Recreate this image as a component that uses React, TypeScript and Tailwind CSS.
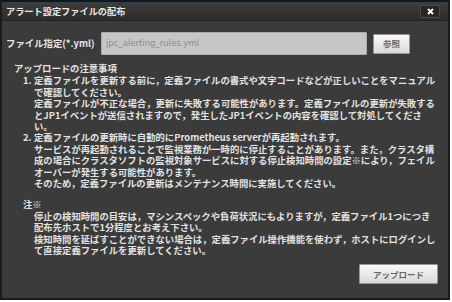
import React from 'react';

const font = { fontFamily: '"Noto Sans CJK JP", "Noto Sans", sans-serif' };

function Line({ children }: { children: React.ReactNode }) {
  return <div className="whitespace-nowrap">{children}</div>;
}

export default function App() {
  return (
    <div className="w-[452px] h-[302px] bg-white" style={font}>
      <div className="w-[450px] h-[300px] flex flex-col bg-[#3b3b3b] border-[2px] border-[#1c1c1c] border-t-[#0e1822]">
        {/* title bar */}
        <div className="h-[19px] flex items-center justify-between pl-[4px] pr-[8px] bg-gradient-to-b from-[#3e3e3e] to-[#2c2c2c] border-b border-[#222]">
          <span className="text-[9.2px] font-bold text-[#e8e8e8] leading-none mt-[1px]">アラート設定ファイルの配布</span>
          <button
            type="button"
            className="w-[20px] h-[13px] flex items-center justify-center bg-[#262626] border border-[#4a4a4a] rounded-[2px]"
          >
            <svg width="7" height="7" viewBox="0 0 7 7">
              <path d="M1 1L6 6M6 1L1 6" stroke="#fff" strokeWidth="1.8" />
            </svg>
          </button>
        </div>

        {/* file row */}
        <div className="flex items-center pl-[4px] mt-[11px]">
          <span className="w-[95px] shrink-0 text-[9.4px] font-bold text-[#e6e6e6] whitespace-nowrap">ファイル指定(*.yml)</span>
          <div className="w-[266px] h-[23px] flex items-center px-[4px] bg-[#c6c6c6] border border-[#aaa] rounded-[1px]">
            <span className="text-[8.5px] text-[#8c8c8c]" style={{ fontFamily: '"DejaVu Sans", sans-serif' }}>
              jpc_alerting_rules.yml
            </span>
          </div>
          <button
            type="button"
            className="ml-[6px] w-[37px] h-[20px] flex items-center justify-center text-[8.5px] font-bold text-[#666] bg-gradient-to-b from-[#fafafa] to-[#dadada] border border-[#999] rounded-[1px]"
          >
            参照
          </button>
        </div>

        {/* notes */}
        <div className="mt-[8px] pl-[12px] text-[9.35px] leading-[11.4px] font-bold text-[#e2e2e2]">
          <div>アップロードの注意事項</div>
          <div className="pl-[9px] mt-[1px]">
            <div className="flex">
              <span className="w-[11px] shrink-0">1.</span>
              <div>
                <Line>定義ファイルを更新する前に，定義ファイルの書式や文字コードなどが正しいことをマニュアル</Line>
                <Line>で確認してください。</Line>
                <Line>定義ファイルが不正な場合，更新に失敗する可能性があります。定義ファイルの更新が失敗する</Line>
                <Line>とJP1イベントが送信されますので，発生したJP1イベントの内容を確認して対処してくださ</Line>
                <Line>い。</Line>
              </div>
            </div>
            <div className="flex">
              <span className="w-[11px] shrink-0">2.</span>
              <div>
                <Line>定義ファイルの更新時に自動的にPrometheus serverが再起動されます。</Line>
                <Line>サービスが再起動されることで監視業務が一時的に停止することがあります。また，クラスタ構</Line>
                <Line>成の場合にクラスタソフトの監視対象サービスに対する停止検知時間の設定※により，フェイル</Line>
                <Line>オーバーが発生する可能性があります。</Line>
                <Line>そのため，定義ファイルの更新はメンテナンス時間に実施してください。</Line>
              </div>
            </div>
            <div className="mt-[10px]">注※</div>
            <div className="pl-[11px]">
              <Line>停止の検知時間の目安は，マシンスペックや負荷状況にもよりますが，定義ファイル1つにつき</Line>
              <Line>配布先ホストで1分程度とお考え下さい。</Line>
              <Line>検知時間を延ばすことができない場合は，定義ファイル操作機能を使わず，ホストにログインし</Line>
              <Line>て直接定義ファイルを更新してください。</Line>
            </div>
          </div>
        </div>

        <div className="flex-1 flex items-end justify-end pr-[10px] pb-[14px]">
          <button
            type="button"
            className="w-[79px] h-[20px] flex items-center justify-center text-[8.5px] font-bold text-[#666] bg-gradient-to-b from-[#fafafa] to-[#d8d8d8] border border-[#999] rounded-[1px]"
          >
            アップロード
          </button>
        </div>
      </div>
    </div>
  );
}
